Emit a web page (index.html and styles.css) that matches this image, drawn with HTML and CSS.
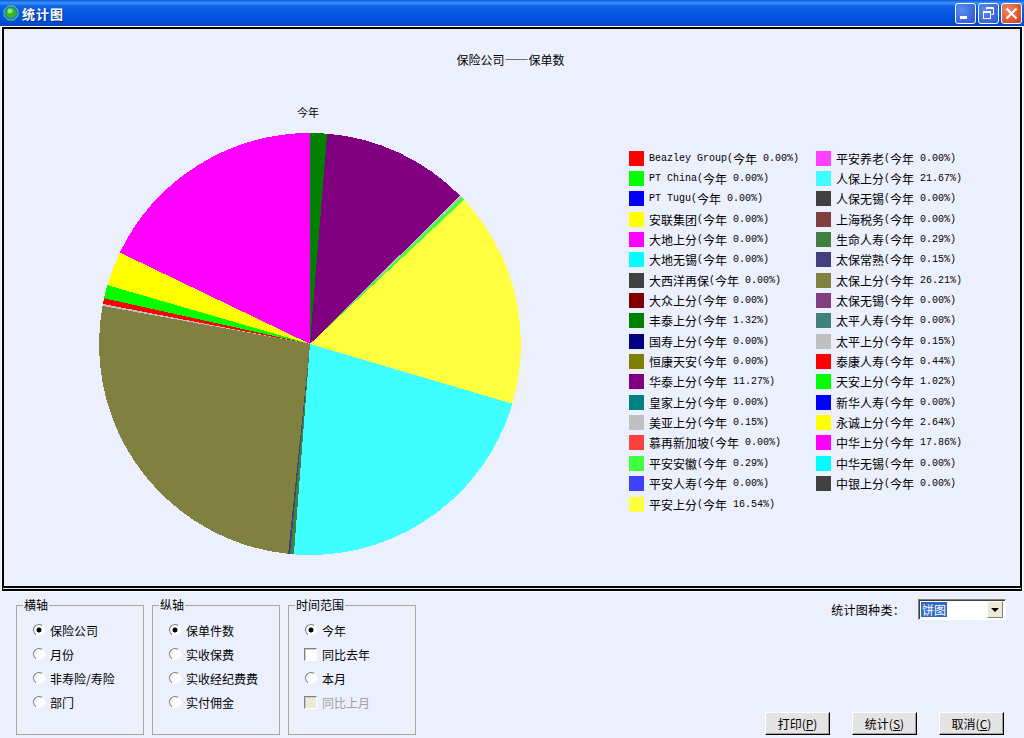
FILE: index.html
```html
<!DOCTYPE html>
<html lang="zh-CN">
<head>
    <meta charset="UTF-8">
    <title>统计图</title>
    <link rel="stylesheet" href="styles.css">
</head>
<body>
    <header class="titlebar">
        <svg class="app-icon" width="16" height="16" viewBox="0 0 16 16">
            <polygon points="5,1 11,1 15,5 15,11 11,15 5,15 1,11 1,5" fill="#1f7fd0" stroke="#5fd060"/>
            <circle cx="8" cy="8" r="5" fill="#3cb81c"/>
            <circle cx="7" cy="6" r="2.5" fill="#9be85a"/>
        </svg>
        <span class="window-title">统计图</span>
        <div class="window-buttons">
            <button class="win-btn">
                <svg width="21" height="21" viewBox="0 0 21 21"><rect x="5" y="13" width="7" height="3" fill="#fff"/></svg>
            </button>
            <button class="win-btn">
                <svg width="21" height="21" viewBox="0 0 21 21" fill="none" stroke="#fff"><path d="M8.500 6.500V4.500H15.500V11.500H13.500M8.500 5.500H15.500"/><rect x="5.500" y="8.500" width="7" height="7"/><path d="M5.500 9.500H12.500"/></svg>
            </button>
            <button class="win-btn close">
                <svg width="21" height="21" viewBox="0 0 21 21" fill="none" stroke="#fff" stroke-width="2.200"><path d="M5.500 5.500L15.500 15.500M15.500 5.500L5.500 15.500"/></svg>
            </button>
        </div>
    </header>

    <main class="chart-panel">
        <h1 class="chart-title">保险公司——保单数</h1>
        <div class="chart-body">
            <div class="pie-block">
                <div class="pie-label">今年</div>
                <!-- one circle per slice, dash = percent -->
                <svg class="pie" width="422" height="422" viewBox="0 0 422 422">
                    <g fill="none" stroke-width="211" transform="rotate(-90 211 211)" shape-rendering="crispEdges">
                        <circle cx="211" cy="211" r="105.5" pathLength="100" stroke="#008000" stroke-dasharray="1.32 98.68" stroke-dashoffset="0"/>
                        <circle cx="211" cy="211" r="105.5" pathLength="100" stroke="#800080" stroke-dasharray="11.27 88.73" stroke-dashoffset="-1.32"/>
                        <circle cx="211" cy="211" r="105.5" pathLength="100" stroke="#c0c0c0" stroke-dasharray="0.15 99.85" stroke-dashoffset="-12.59"/>
                        <circle cx="211" cy="211" r="105.5" pathLength="100" stroke="#40ff40" stroke-dasharray="0.29 99.71" stroke-dashoffset="-12.74"/>
                        <circle cx="211" cy="211" r="105.5" pathLength="100" stroke="#ffff40" stroke-dasharray="16.54 83.46" stroke-dashoffset="-13.03"/>
                        <circle cx="211" cy="211" r="105.5" pathLength="100" stroke="#40ffff" stroke-dasharray="21.67 78.33" stroke-dashoffset="-29.57"/>
                        <circle cx="211" cy="211" r="105.5" pathLength="100" stroke="#408040" stroke-dasharray="0.29 99.71" stroke-dashoffset="-51.24"/>
                        <circle cx="211" cy="211" r="105.5" pathLength="100" stroke="#404080" stroke-dasharray="0.15 99.85" stroke-dashoffset="-51.53"/>
                        <circle cx="211" cy="211" r="105.5" pathLength="100" stroke="#808040" stroke-dasharray="26.21 73.79" stroke-dashoffset="-51.68"/>
                        <circle cx="211" cy="211" r="105.5" pathLength="100" stroke="#c0c0c0" stroke-dasharray="0.15 99.85" stroke-dashoffset="-77.89"/>
                        <circle cx="211" cy="211" r="105.5" pathLength="100" stroke="#ff0000" stroke-dasharray="0.44 99.56" stroke-dashoffset="-78.04"/>
                        <circle cx="211" cy="211" r="105.5" pathLength="100" stroke="#00ff00" stroke-dasharray="1.02 98.98" stroke-dashoffset="-78.48"/>
                        <circle cx="211" cy="211" r="105.5" pathLength="100" stroke="#ffff00" stroke-dasharray="2.64 97.36" stroke-dashoffset="-79.50"/>
                        <circle cx="211" cy="211" r="105.5" pathLength="100" stroke="#ff00ff" stroke-dasharray="17.86 82.14" stroke-dashoffset="-82.14"/>
                    </g>
                </svg>
            </div>
            <ul class="legend">
                <li><i class="swatch c-red"></i>Beazley Group(<b>今年</b> 0.00%)</li>
                <li><i class="swatch c-lime"></i>PT China(<b>今年</b> 0.00%)</li>
                <li><i class="swatch c-blue"></i>PT Tugu(<b>今年</b> 0.00%)</li>
                <li><i class="swatch c-yellow"></i><b>安联集团</b>(<b>今年</b> 0.00%)</li>
                <li><i class="swatch c-magenta"></i><b>大地上分</b>(<b>今年</b> 0.00%)</li>
                <li><i class="swatch c-cyan"></i><b>大地无锡</b>(<b>今年</b> 0.00%)</li>
                <li><i class="swatch c-dark"></i><b>大西洋再保</b>(<b>今年</b> 0.00%)</li>
                <li><i class="swatch c-maroon"></i><b>大众上分</b>(<b>今年</b> 0.00%)</li>
                <li><i class="swatch c-green"></i><b>丰泰上分</b>(<b>今年</b> 1.32%)</li>
                <li><i class="swatch c-navy"></i><b>国寿上分</b>(<b>今年</b> 0.00%)</li>
                <li><i class="swatch c-olive"></i><b>恒康天安</b>(<b>今年</b> 0.00%)</li>
                <li><i class="swatch c-purple"></i><b>华泰上分</b>(<b>今年</b> 11.27%)</li>
                <li><i class="swatch c-teal"></i><b>皇家上分</b>(<b>今年</b> 0.00%)</li>
                <li><i class="swatch c-silver"></i><b>美亚上分</b>(<b>今年</b> 0.15%)</li>
                <li><i class="swatch c-red2"></i><b>慕再新加坡</b>(<b>今年</b> 0.00%)</li>
                <li><i class="swatch c-lime2"></i><b>平安安徽</b>(<b>今年</b> 0.29%)</li>
                <li><i class="swatch c-blue2"></i><b>平安人寿</b>(<b>今年</b> 0.00%)</li>
                <li><i class="swatch c-yellow2"></i><b>平安上分</b>(<b>今年</b> 16.54%)</li>
                <li><i class="swatch c-magenta2"></i><b>平安养老</b>(<b>今年</b> 0.00%)</li>
                <li><i class="swatch c-cyan2"></i><b>人保上分</b>(<b>今年</b> 21.67%)</li>
                <li><i class="swatch c-dark"></i><b>人保无锡</b>(<b>今年</b> 0.00%)</li>
                <li><i class="swatch c-maroon2"></i><b>上海税务</b>(<b>今年</b> 0.00%)</li>
                <li><i class="swatch c-green2"></i><b>生命人寿</b>(<b>今年</b> 0.29%)</li>
                <li><i class="swatch c-navy2"></i><b>太保常熟</b>(<b>今年</b> 0.15%)</li>
                <li><i class="swatch c-olive2"></i><b>太保上分</b>(<b>今年</b> 26.21%)</li>
                <li><i class="swatch c-purple2"></i><b>太保无锡</b>(<b>今年</b> 0.00%)</li>
                <li><i class="swatch c-teal2"></i><b>太平人寿</b>(<b>今年</b> 0.00%)</li>
                <li><i class="swatch c-silver"></i><b>太平上分</b>(<b>今年</b> 0.15%)</li>
                <li><i class="swatch c-red"></i><b>泰康人寿</b>(<b>今年</b> 0.44%)</li>
                <li><i class="swatch c-lime"></i><b>天安上分</b>(<b>今年</b> 1.02%)</li>
                <li><i class="swatch c-blue"></i><b>新华人寿</b>(<b>今年</b> 0.00%)</li>
                <li><i class="swatch c-yellow"></i><b>永诚上分</b>(<b>今年</b> 2.64%)</li>
                <li><i class="swatch c-magenta"></i><b>中华上分</b>(<b>今年</b> 17.86%)</li>
                <li><i class="swatch c-cyan"></i><b>中华无锡</b>(<b>今年</b> 0.00%)</li>
                <li><i class="swatch c-dark"></i><b>中银上分</b>(<b>今年</b> 0.00%)</li>
            </ul>
        </div>
    </main>

    <section class="controls">
        <fieldset class="group">
            <legend>横轴</legend>
            <label class="opt"><input type="radio" name="x" checked>保险公司</label>
            <label class="opt"><input type="radio" name="x">月份</label>
            <label class="opt"><input type="radio" name="x">非寿险/寿险</label>
            <label class="opt"><input type="radio" name="x">部门</label>
        </fieldset>
        <fieldset class="group">
            <legend>纵轴</legend>
            <label class="opt"><input type="radio" name="y" checked>保单件数</label>
            <label class="opt"><input type="radio" name="y">实收保费</label>
            <label class="opt"><input type="radio" name="y">实收经纪费费</label>
            <label class="opt"><input type="radio" name="y">实付佣金</label>
        </fieldset>
        <fieldset class="group">
            <legend>时间范围</legend>
            <label class="opt"><input type="radio" name="t" checked>今年</label>
            <label class="opt"><input type="checkbox">同比去年</label>
            <label class="opt"><input type="radio" name="t">本月</label>
            <label class="opt disabled"><input type="checkbox" disabled>同比上月</label>
        </fieldset>
        <div class="side">
            <div class="chart-type">
                <span class="type-label">统计图种类：</span>
                <div class="combo">
                    <span class="combo-value">饼图</span>
                    <span class="combo-arrow"></span>
                </div>
            </div>
            <div class="actions">
                <button class="btn">打印(<u>P</u>)</button>
                <button class="btn">统计(<u>S</u>)</button>
                <button class="btn">取消(<u>C</u>)</button>
            </div>
        </div>
    </section>
</body>
</html>
```

FILE: styles.css
```css
* {
    box-sizing: border-box;
}

html, body {
    height: 738px;
}

body {
    margin: 0;
    background-color: #ecf0fd;
    color: #000000;
    font-family: 'Noto Sans CJK SC', sans-serif;
    font-size: 12px;
    overflow: hidden;
    display: flex;
    flex-direction: column;
}

.titlebar {
    height: 26px;
    flex: none;
    display: flex;
    align-items: center;
    padding: 0 2px 0 3px;
    background: linear-gradient(#0a5be0 0, #3d93f8 3px, #0f62e6 6px, #0053e0 18px, #0047c8 25px);
}

.app-icon {
    margin-right: 3px;
}

.window-title {
    color: #ffffff;
    font-size: 13px;
    font-weight: bold;
    letter-spacing: 1px;
    text-shadow: 1px 1px 0 #0a2f80;
}

.window-buttons {
    margin-left: auto;
    display: flex;
    gap: 2px;
}

.win-btn {
    width: 21px;
    height: 21px;
    padding: 0;
    border: 1px solid #ffffff;
    border-radius: 3px;
    background: radial-gradient(circle at 30% 30%, #5a8cf0, #2a55d0);
    overflow: hidden;
}

.win-btn svg {
    display: block;
    margin: -1px;
}

.win-btn.close {
    background: radial-gradient(circle at 30% 30%, #ee8a60, #d03c18);
}

.chart-panel {
    height: 564px;
    flex: none;
    margin: 1px 2px 0 2px;
    border: 2px solid #000000;
    border-bottom: 5px double #000000;
    outline: 1px solid #ffffff;
}

.chart-title {
    margin: 0;
    padding: 23px 3px 0 0;
    height: 57px;
    font-size: 12px;
    font-weight: normal;
    line-height: 16px;
    text-align: center;
}

.chart-body {
    display: flex;
    align-items: flex-start;
}

.pie-block {
    width: 422px;
    margin-left: 95px;
}

.pie-label {
    height: 47px;
    padding-top: 18px;
    padding-right: 4px;
    line-height: 16px;
    font-size: 11px;
    text-align: center;
}

.pie {
    display: block;
}

.legend {
    list-style: none;
    margin: 62px 0 0 108px;
    padding: 0;
    display: grid;
    grid-template-rows: repeat(18, 20.35px);
    grid-auto-flow: column;
    grid-template-columns: 187px 187px;
    font-family: 'Liberation Mono', monospace;
    font-size: 10px;
}

.legend li {
    display: flex;
    align-items: center;
    white-space: pre;
}

.legend b {
    font-family: 'Noto Sans CJK SC', sans-serif;
    font-size: 12px;
    font-weight: normal;
}

.swatch {
    width: 15px;
    height: 15px;
    margin-right: 5px;
    flex: none;
}

.c-red { background-color: #ff0000; }
.c-lime { background-color: #00ff00; }
.c-blue { background-color: #0000ff; }
.c-yellow { background-color: #ffff00; }
.c-magenta { background-color: #ff00ff; }
.c-cyan { background-color: #00ffff; }
.c-dark { background-color: #404040; }
.c-maroon { background-color: #800000; }
.c-green { background-color: #008000; }
.c-navy { background-color: #000080; }
.c-olive { background-color: #808000; }
.c-purple { background-color: #800080; }
.c-teal { background-color: #008080; }
.c-silver { background-color: #c0c0c0; }
.c-red2 { background-color: #ff4040; }
.c-lime2 { background-color: #40ff40; }
.c-blue2 { background-color: #4040ff; }
.c-yellow2 { background-color: #ffff40; }
.c-magenta2 { background-color: #ff40ff; }
.c-cyan2 { background-color: #40ffff; }
.c-maroon2 { background-color: #804040; }
.c-green2 { background-color: #408040; }
.c-navy2 { background-color: #404080; }
.c-olive2 { background-color: #808040; }
.c-purple2 { background-color: #804080; }
.c-teal2 { background-color: #408080; }

.controls {
    flex: 1;
    display: flex;
    gap: 8px;
    padding: 7px 0 3px 16px;
    min-height: 0;
}

.group {
    width: 128px;
    height: 137px;
    margin: 0;
    padding: 6px 0 0 16px;
    border: 1px solid #a8a898;
    display: flex;
    flex-direction: column;
}

.group legend {
    margin-left: -10px;
    padding: 0 1px;
    font-size: 12px;
    line-height: 14px;
}

.opt {
    height: 24px;
    display: flex;
    align-items: center;
    gap: 5px;
    white-space: nowrap;
}

.opt.disabled {
    color: #a0a0a0;
}

.opt input {
    appearance: none;
    flex: none;
    margin: 0;
    width: 12px;
    height: 12px;
    border: 1px solid;
    border-color: #808080 #ffffff #ffffff #808080;
}

.opt input[type="radio"] {
    border-radius: 50%;
    transform: rotate(-10deg);
    background-color: #ffffff;
}

.opt input[type="radio"]:checked {
    background: radial-gradient(circle, #000000 2.2px, #ffffff 2.8px);
}

.opt input[type="checkbox"] {
    width: 13px;
    height: 13px;
    margin-left: -1px;
    background-color: #ffffff;
    box-shadow: inset 1px 1px 0 #d0d0c8;
}

.opt input[type="checkbox"]:disabled {
    background-color: #ece9d8;
}

.side {
    flex: 1;
    display: flex;
    flex-direction: column;
    justify-content: space-between;
    padding-right: 20px;
}

.chart-type {
    display: flex;
    align-items: center;
    justify-content: flex-end;
    margin-right: -2px;
    margin-top: 1px;
}

.type-label {
    margin-right: 13px;
    letter-spacing: 0.300px;
}

.combo {
    width: 88px;
    height: 21px;
    display: flex;
    align-items: center;
    padding: 2px;
    background-color: #ffffff;
    border: 1px solid;
    border-color: #808078 #ffffff #ffffff #808078;
    box-shadow: inset 1px 1px 0 #404040;
}

.combo-value {
    background-color: #316ac5;
    color: #ffffff;
    line-height: 15px;
    padding: 0 1px;
}

.combo-arrow {
    margin-left: auto;
    width: 16px;
    height: 17px;
    background-color: #ece9d8;
    border: 1px solid;
    border-color: #ffffff #808080 #808080 #ffffff;
    position: relative;
}

.combo-arrow::after {
    content: "";
    position: absolute;
    left: 3px;
    top: 6px;
    border: 4px solid transparent;
    border-top-color: #000000;
    border-bottom-width: 0;
}

.actions {
    display: flex;
    justify-content: flex-end;
    gap: 22px;
}

.btn {
    width: 65px;
    height: 23px;
    padding: 0;
    font-family: inherit;
    font-size: 12px;
    line-height: 1;
    background-color: #e4e4e4;
    border: 1px solid;
    border-color: #ffffff #000000 #000000 #ffffff;
    box-shadow: inset -1px -1px 0 #a0a0a0;
}
```
